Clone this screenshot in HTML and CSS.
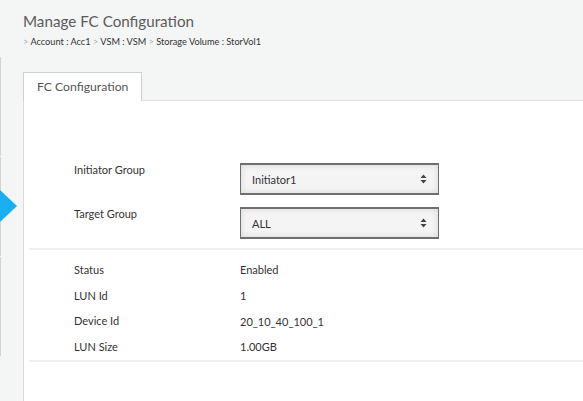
FILE: index.html
```html
<!DOCTYPE html>
<html>
<head>
<meta charset="utf-8">
<link rel="stylesheet" href="styles.css">
</head>
<body>
<div class="layout">
  <aside class="sidebar">
    <div class="side-item"></div>
    <div class="side-item"></div>
    <div class="side-item"></div>
    <span class="pointer"></span>
  </aside>
  <main class="main">
    <h1 class="title">Manage FC Configuration</h1>
    <nav class="crumbs">
      <span class="sep">&gt;</span> Account : Acc1 <span class="sep">&gt;</span> VSM : VSM <span class="sep">&gt;</span> Storage Volume : StorVol1
    </nav>
    <div class="tabs">
      <div class="tab">FC Configuration</div>
    </div>
    <section class="panel">
      <div class="form">
        <div class="form-row">
          <label class="label">Initiator Group</label>
          <div class="select"><span>Initiator1</span><svg class="arrows" width="7" height="10" viewBox="0 0 7 10"><path d="M3.5 0.5 L6.5 4 L0.5 4 Z M3.5 9.5 L6.5 6 L0.5 6 Z" fill="#444"/></svg></div>
        </div>
        <div class="form-row">
          <label class="label">Target Group</label>
          <div class="select"><span>ALL</span><svg class="arrows" width="7" height="10" viewBox="0 0 7 10"><path d="M3.5 0.5 L6.5 4 L0.5 4 Z M3.5 9.5 L6.5 6 L0.5 6 Z" fill="#444"/></svg></div>
        </div>
      </div>
      <div class="details">
        <div class="row"><span class="label">Status</span><span class="value">Enabled</span></div>
        <div class="row"><span class="label">LUN Id</span><span class="value">1</span></div>
        <div class="row"><span class="label">Device Id</span><span class="value">20_10_40_100_1</span></div>
        <div class="row"><span class="label">LUN Size</span><span class="value">1.00GB</span></div>
      </div>
    </section>
  </main>
</div>
</body>
</html>
```

FILE: styles.css
```css
* { box-sizing: border-box; }
html, body { margin: 0; height: 100%; }
body {
  background: #f4f5f5;
  font-family: Lato, "Open Sans", sans-serif;
  color: #333;
  overflow: hidden;
}
.layout { display: flex; height: 401px; }
.sidebar {
  width: 23px;
  flex: none;
  position: relative;
  padding-top: 57px;
}
.side-item {
  height: 99px;
  margin-bottom: 1px;
  border-left: 1px solid #d2d3d3;
}
.pointer {
  position: absolute;
  left: 0;
  top: 190px;
  width: 0;
  height: 0;
  border-top: 16.5px solid transparent;
  border-bottom: 16.5px solid transparent;
  border-left: 17px solid #1aaff0;
}
.main { flex: 1; display: flex; flex-direction: column; min-width: 0; }
.title {
  margin: 11px 0 0;
  font-weight: normal;
  font-size: 15.2px;
  line-height: 20px;
  color: #5b5b5b;
}
.crumbs {
  margin-top: 5px;
  font-size: 9.2px;
  line-height: 12px;
  color: #333;
}
.sep { color: #b0b0b0; }
.tabs {
  margin-top: 24px;
  display: flex;
  border-bottom: 1px solid #e0dde0;
  height: 29px;
}
.tab {
  width: 119px;
  height: 29px;
  background: #fff;
  border: 1px solid #cfcfcf;
  border-bottom: none;
  font-size: 12.2px;
  line-height: 27px;
  padding-left: 13px;
  color: #555;
  margin-bottom: -1px;
}
.panel {
  flex: 1;
  background: #fff;
  border-left: 1px solid #dadada;
  padding: 0 0 0 5px;
}
.form {
  padding-top: 62px;
  padding-bottom: 9px;
  border-bottom: 2px solid #efefef;
  display: flex;
  flex-direction: column;
  gap: 12px;
}
.form-row { display: flex; align-items: flex-start; }
.label {
  width: 211px;
  padding-left: 45px;
  font-size: 11px;
  line-height: 14px;
  color: #333;
  flex: none;
}
.select {
  width: 199px;
  height: 32px;
  border: 2px solid #6f6f6f;
  border-width: 2px 1px 2px 1px;
  background: #f4f4f4;
  box-shadow: inset 0 0 6px rgba(0,0,0,0.12);
  display: flex;
  align-items: center;
  justify-content: space-between;
  padding: 0 11px 0 11px;
  font-size: 11px;
  color: #333;
}
.arrows { display: block; }
.details {
  padding: 7px 0 0;
  border-bottom: 2px solid #efefef;
  display: flex;
  flex-direction: column;
}
.row {
  display: flex;
  height: 25.7px;
  align-items: center;
}
.value { font-size: 11px; color: #333; }
```
